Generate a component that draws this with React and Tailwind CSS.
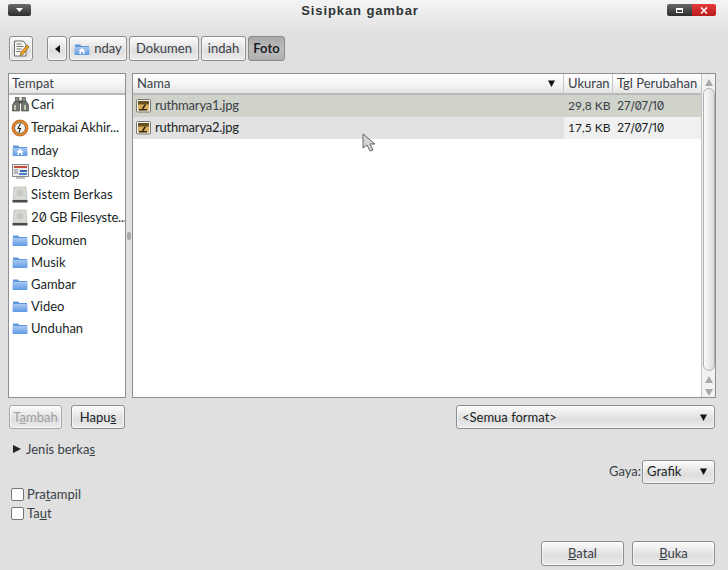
const font = { fontFamily: '"Lato","Open Sans",sans-serif' };

function Btn({ className = "", justify = "justify-center", children }) {
  return (
    <div className={"flex items-center rounded-[3px] border border-[#8e8e8e] bg-gradient-to-b from-[#fcfcfc] via-[#dedede] via-[60%] to-[#ececec] shadow-[inset_0_0_0_1px_rgba(255,255,255,0.6)] " + justify + " " + className}>
      {children}
    </div>
  );
}

function Arrow({ className = "" }) {
  return (
    <svg width="7" height="7" viewBox="0 0 7 7" className={className}>
      <path d="M0 0.5h7L3.5 7z" fill="#111" />
    </svg>
  );
}

function Num({ children }) {
  return <span style={{ fontFamily: "Inter,sans-serif" }} className="slashed-zero tracking-[-0.3px]">{children}</span>;
}

function Folder({ home }) {
  return (
    <svg width="16" height="14" viewBox="0 0 16 14" className="shrink-0">
      <defs>
        <linearGradient id="fld" x1="0" y1="0" x2="0" y2="1">
          <stop offset="0" stopColor="#a8c8f0" />
          <stop offset="1" stopColor="#5f9ae6" />
        </linearGradient>
      </defs>
      <path d="M1 2.5h5l1.5 1.5H15v8.5H1z" fill="#5f97dc" />
      <path d="M0.5 5h15v7a1 1 0 0 1-1 1h-13a1 1 0 0 1-1-1z" fill="url(#fld)" />
      {home && <path d="M8 6l3.5 3H10.5v3H9V10H7v2H5.5V9H4.5z" fill="#fff" />}
    </svg>
  );
}

function Drive() {
  return (
    <svg width="16" height="17" viewBox="0 0 16 17" className="shrink-0">
      <path d="M2 1h12l1 13H1z" fill="#d8d8d4" stroke="#b4b4b0" strokeWidth="0.6" />
      <circle cx="8" cy="7" r="3.5" fill="#c8c8c4" />
      <rect x="0.5" y="14" width="15" height="2.5" fill="#4a4a48" />
    </svg>
  );
}

function Binoculars() {
  return (
    <svg width="17" height="15" viewBox="0 0 17 15" className="shrink-0">
      <rect x="3.5" y="0.5" width="3.5" height="4" fill="#8a8a84" stroke="#44443f" strokeWidth="0.6" />
      <rect x="10" y="0.5" width="3.5" height="4" fill="#8a8a84" stroke="#44443f" strokeWidth="0.6" />
      <rect x="7" y="3.5" width="3" height="3" fill="#55554f" />
      <path d="M2.5 4.5H7.500V14H0.500V8z" fill="#74746e" stroke="#3c3c38" strokeWidth="0.6" />
      <path d="M9.500 4.500H14.500L16.500 8V14H9.500z" fill="#74746e" stroke="#3c3c38" strokeWidth="0.6" />
      <path d="M2 8h2v5H2zM12 8h2v5h-2z" fill="#c4c4be" />
    </svg>
  );
}

function Recent() {
  return (
    <svg width="18" height="18" viewBox="0 0 18 18" className="shrink-0">
      <circle cx="9" cy="9" r="8" fill="#e8872a" stroke="#b85f10" strokeWidth="0.8" />
      <circle cx="9" cy="9" r="5.4" fill="#f6f6f2" stroke="#555" strokeWidth="0.7" />
      <path d="M9.500 4.500L7 9.500h2.500L8 13.500" fill="none" stroke="#222" strokeWidth="1.1" />
    </svg>
  );
}

function Desktop() {
  return (
    <svg width="17" height="16" viewBox="0 0 17 16" className="shrink-0">
      <rect x="0.5" y="0.5" width="16" height="12" fill="#ecebe8" stroke="#8a8a8a" />
      <rect x="2" y="2" width="13" height="2" fill="#c44a3c" />
      <rect x="8" y="6" width="7" height="2" fill="#3a68b8" />
      <rect x="2" y="5" width="4" height="5" fill="#b8b8c4" />
      <rect x="7" y="9" width="8" height="2" fill="#4c7fcc" />
      <rect x="4" y="13" width="9" height="2" fill="#c0c0c0" />
    </svg>
  );
}

function ImgIcon() {
  return (
    <svg width="16" height="14" viewBox="0 0 16 14" className="shrink-0">
      <rect x="0.5" y="0.5" width="14" height="12.500" rx="1" fill="#f4f4f4" stroke="#77776f" />
      <rect x="2" y="2" width="11" height="9.500" fill="#d8b060" />
      <rect x="2" y="2" width="11" height="3.500" fill="#6a5020" />
      <path d="M6 9l3-4 1 1-3 5zM3 10h8v1.500H3z" fill="#3a2c10" />
    </svg>
  );
}

function EditIcon() {
  return (
    <svg width="16" height="17" viewBox="0 0 16 17">
      <path d="M1.500 1h8.500l3 3v12h-11.500z" fill="#f7f7f4" stroke="#6a6a68" />
      <path d="M3.500 4h5M3.500 6.500h7M3.500 9h5M3.500 11.500h4" stroke="#77776f" />
      <path d="M14 5l2 2-6 7.500-3 1 .7-3z" fill="#e8a020" stroke="#7a5010" strokeWidth="0.6" />
    </svg>
  );
}

const places = [
  { n: "Cari", i: <Binoculars />, h: "h-[23px]" },
  { n: "Terpakai Akhir...", i: <Recent />, h: "h-[23px]", t: "tracking-[-0.1px]" },
  { n: "nday", i: <Folder home />, h: "h-[22px]" },
  { n: "Desktop", i: <Desktop />, h: "h-[22px]" },
  { n: "Sistem Berkas", i: <Drive />, h: "h-[23px]", t: "tracking-[0.15px]" },
  { n: <><Num>20</Num> GB Filesyste...</>, i: <Drive />, h: "h-[23px]", t: "tracking-[-0.2px]" },
  { n: "Dokumen", i: <Folder />, h: "h-[22px]" },
  { n: "Musik", i: <Folder />, h: "h-[22px]" },
  { n: "Gambar", i: <Folder />, h: "h-[22px]" },
  { n: "Video", i: <Folder />, h: "h-[22px]" },
  { n: "Unduhan", i: <Folder />, h: "h-[22px]" },
];

function HeaderCell({ className = "", children }) {
  return (
    <div className={"flex h-[21px] items-center border-b-2 border-[#b8b8b8] bg-gradient-to-b from-[#ffffff] via-[#f6f6f6] to-[#e4e4e4] text-[#2e3436] " + className}>
      {children}
    </div>
  );
}

function ScrollUp({ className = "" }) {
  return <svg width="8" height="7" viewBox="0 0 8 7" className={className}><path d="M4 0l4 7H0z" fill="#a8a8a8" /></svg>;
}

function ScrollDown({ className = "" }) {
  return <svg width="8" height="7" viewBox="0 0 8 7" className={className}><path d="M0 0h8L4 7z" fill="#a8a8a8" /></svg>;
}

export default function App() {
  return (
    <div style={font} className="relative flex h-[570px] w-[728px] flex-col overflow-hidden bg-[#e0e0e0] text-[13px] leading-none text-[#1a1f26]">
      {/* title bar */}
      <div className="flex h-[36px] items-start justify-between bg-gradient-to-b from-[#f4f4f4] to-[#e0e0e0] px-2 pt-1">
        <div className="flex h-[12px] w-[23px] items-center justify-center rounded-[2px] bg-gradient-to-b from-[#6a6a6a] to-[#2e2e2e]">
          <svg width="7" height="4" viewBox="0 0 7 4"><path d="M0 0h7L3.500 4z" fill="#fff" /></svg>
        </div>
        <div style={{ fontFamily: '"Liberation Sans",sans-serif' }} className="ml-[22px] text-[13px] font-bold leading-[14px] tracking-[0.9px] text-[#2e3436]">Sisipkan gambar</div>
        <div className="mr-[4px] flex h-[12px] w-[49px] overflow-hidden rounded-[2px]">
          <div className="flex w-[25px] items-center justify-center bg-gradient-to-b from-[#666] to-[#2e2e2e]">
            <div className="h-[5px] w-[7px] border border-t-2 border-white" />
          </div>
          <div className="flex flex-1 items-center justify-center bg-gradient-to-b from-[#e8393a] to-[#b81a1c]">
            <svg width="8" height="7" viewBox="0 0 8 7"><path d="M1 0.500l6 6M7 0.500l-6 6" stroke="#fff" strokeWidth="1.6" /></svg>
          </div>
        </div>
      </div>

      {/* path bar */}
      <div className="flex h-[25px] items-stretch pl-[9px] text-[#3a4048]">
        <Btn className="w-[24px]"><EditIcon /></Btn>
        <Btn className="ml-[14px] w-[20px]">
          <svg width="5" height="8" viewBox="0 0 5 8"><path d="M5 0v8L0 4z" fill="#111" /></svg>
        </Btn>
        <Btn className="ml-[2px] w-[58px] gap-[4px]"><Folder home /><span>nday</span></Btn>
        <Btn className="ml-[2px] w-[70px]">Dokumen</Btn>
        <Btn className="ml-[2px] w-[45px]">indah</Btn>
        <div className="ml-[2px] flex w-[37px] items-center justify-center rounded-[3px] border border-[#8a8a8a] bg-gradient-to-b from-[#a8a8a8] via-[#bcbcbc] to-[#b0b0b0] font-bold text-[#1a1f26]">Foto</div>
      </div>

      {/* panes */}
      <div className="mt-[12px] flex h-[325px] pl-[8px]">
        <div className="h-full w-[118px] overflow-hidden border border-[#8f8f8f] bg-white">
          <HeaderCell className="pl-[3px] text-[#3a4048]">Tempat</HeaderCell>
          <div className="-mt-[2px]">
            {places.map((p, idx) => (
              <div key={idx} className={"flex items-center gap-[2px] whitespace-nowrap pl-[2px] " + p.h + " " + (p.t || "")}>
                <span className="flex w-[18px] shrink-0 justify-center">{p.i}</span>
                <span>{p.n}</span>
              </div>
            ))}
          </div>
        </div>
        <div className="flex w-[6px] items-center justify-center">
          <div className="h-[8px] w-[4px] rounded-[2px] bg-[#a8a8a8]" />
        </div>
        <div className="relative flex h-full w-[584px] border border-[#8f8f8f] bg-white">
          <div className="flex min-w-0 flex-1 flex-col">
            <div className="flex">
              <HeaderCell className="w-[431px] justify-between border-r border-r-[#c8c8c8] pl-[4px] pr-[8px]">
                <span className="text-[#3a4048]">Nama</span>
                <Arrow />
              </HeaderCell>
              <HeaderCell className="w-[49px] border-r border-r-[#c8c8c8] pl-[4px] text-[#3a4048]">Ukuran</HeaderCell>
              <HeaderCell className="flex-1 pl-[4px] text-[#3a4048]">Tgl Perubahan</HeaderCell>
            </div>
            <div className="flex h-[22px] items-center bg-[#d0d3ca] pb-[1px] text-[#3a4048]">
              <div className="flex w-[431px] items-center gap-[3px] pl-[3px]"><ImgIcon /><span className="tracking-[-0.2px]">ruthmarya1.jpg</span></div>
              <div className="w-[49px] pl-[4px] text-[12px]">29,8 KB</div>
              <div className="pl-[4px] text-[12px]"><Num>27/07/10</Num></div>
            </div>
            <div className="flex h-[22px] items-center">
              <div className="flex h-full w-[431px] items-center gap-[3px] bg-[#e2e2e2] pb-[1px] pl-[3px]"><ImgIcon /><span className="tracking-[-0.2px]">ruthmarya2.jpg</span></div>
              <div className="flex h-full flex-1 items-center bg-[#f0f0f0] pb-[1px]">
                <div className="w-[49px] pl-[4px] text-[12px]">17,5 KB</div>
                <div className="pl-[4px] text-[12px]"><Num>27/07/10</Num></div>
              </div>
            </div>
          </div>
          <div className="flex w-[14px] flex-col items-center border-l border-[#c4c4c4] bg-[#f2f2f2]">
            <ScrollUp className="mt-[5px]" />
            <div className="mt-[2px] h-[283px] w-[12px] shrink-0 rounded-[6px] border border-[#b0b0b0] bg-gradient-to-r from-[#fafafa] to-[#dcdcdc]" />
            <ScrollUp className="mt-[5px]" />
            <ScrollDown className="mt-[6px]" />
          </div>
        </div>
      </div>

      {/* add/remove + filter */}
      <div className="mt-[7px] flex h-[24px] items-stretch pl-[9px] pr-[13px]">
        <Btn className="w-[53px] border-[#a8a8a8] text-[#a0a0a0]"><span>T<u>a</u>mbah</span></Btn>
        <Btn className="ml-[9px] w-[54px]"><span>Hapu<u>s</u></span></Btn>
        <Btn justify="justify-between" className="ml-auto w-[259px] pl-[5px] pr-[7px]"><span>&lt;Semua format&gt;</span><Arrow /></Btn>
      </div>

      {/* expander */}
      <div className="mt-[13px] flex h-[14px] items-center pl-[13px] text-[#3a4048]">
        <svg width="8" height="8" viewBox="0 0 8 8"><path d="M0 0l8 4-8 4z" fill="#222" /></svg>
        <span className="ml-[5px]">Jenis berka<u>s</u></span>
      </div>

      {/* style */}
      <div className="mt-[4px] flex h-[24px] items-center justify-end pr-[13px]">
        <span className="mr-[1px] pb-[1px] text-[#3a4048]">Gaya:</span>
        <Btn justify="justify-between" className="h-full w-[73px] pb-[1px] pl-[4px] pr-[7px]"><span>Grafik</span><Arrow /></Btn>
      </div>

      {/* checks */}
      <div className="mt-[1px] flex h-[19px] items-center pl-[11px] text-[#3a4048]">
        <div className="h-[13px] w-[13px] rounded-[2px] border border-[#777] bg-white" />
        <span className="ml-[3px]">Pra<u>t</u>ampil</span>
      </div>
      <div className="flex h-[19px] items-center pl-[11px] text-[#3a4048]">
        <div className="h-[13px] w-[13px] rounded-[2px] border border-[#777] bg-white" />
        <span className="ml-[3px]">Ta<u>u</u>t</span>
      </div>

      {/* actions */}
      <div className="mt-[18px] flex h-[25px] items-stretch justify-end gap-[8px] pr-[13px] text-[#3a4048]">
        <Btn className="w-[83px]"><span><u>B</u>atal</span></Btn>
        <Btn className="w-[83px]"><span><u>B</u>uka</span></Btn>
      </div>

      {/* mouse pointer */}
      <svg width="16" height="21" viewBox="0 0 16 21" className="absolute left-[362px] top-[133px]">
        <path d="M1 1v14l4-3 3 6 3-1-3-6h5z" fill="#d4d4d4" stroke="#666" strokeWidth="1" />
      </svg>
    </div>
  );
}
